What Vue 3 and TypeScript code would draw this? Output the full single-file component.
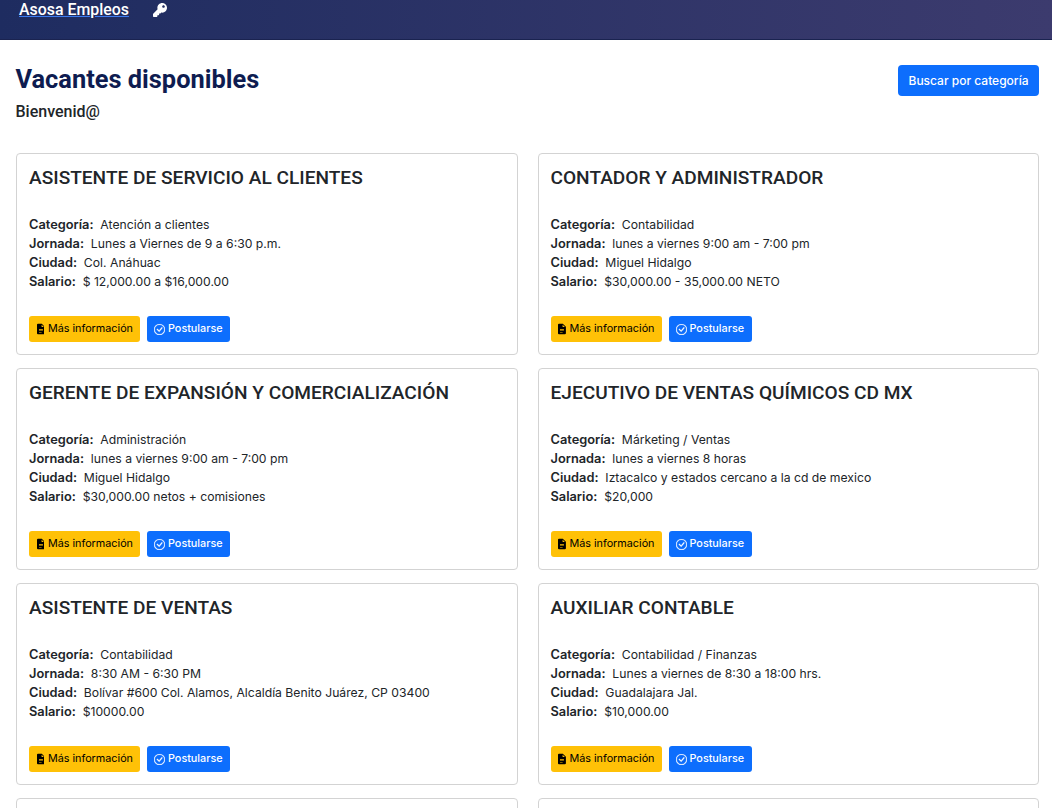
<script setup lang="ts">
interface Job { title: string; cat: string; jor: string; ciu: string; sal: string }
const jobs: Job[] = [
  { title: 'ASISTENTE DE SERVICIO AL CLIENTES', cat: 'Atención a clientes', jor: 'Lunes a Viernes de 9 a 6:30 p.m.', ciu: 'Col. Anáhuac', sal: '$ 12,000.00 a $16,000.00' },
  { title: 'CONTADOR Y ADMINISTRADOR', cat: 'Contabilidad', jor: 'lunes a viernes 9:00 am - 7:00 pm', ciu: 'Miguel Hidalgo', sal: '$30,000.00 - 35,000.00 NETO' },
  { title: 'GERENTE DE EXPANSIÓN Y COMERCIALIZACIÓN', cat: 'Administración', jor: 'lunes a viernes 9:00 am - 7:00 pm', ciu: 'Miguel Hidalgo', sal: '$30,000.00 netos + comisiones' },
  { title: 'EJECUTIVO DE VENTAS QUÍMICOS CD MX', cat: 'Márketing / Ventas', jor: 'lunes a viernes 8 horas', ciu: 'Iztacalco y estados cercano a la cd de mexico', sal: '$20,000' },
  { title: 'ASISTENTE DE VENTAS', cat: 'Contabilidad', jor: '8:30 AM - 6:30 PM', ciu: 'Bolívar #600 Col. Alamos, Alcaldía Benito Juárez, CP 03400', sal: '$10000.00' },
  { title: 'AUXILIAR CONTABLE', cat: 'Contabilidad / Finanzas', jor: 'Lunes a viernes de 8:30 a 18:00 hrs.', ciu: 'Guadalajara Jal.', sal: '$10,000.00' },
  { title: '', cat: '', jor: '', ciu: '', sal: '' },
  { title: '', cat: '', jor: '', ciu: '', sal: '' },
]
</script>

<template>
  <div class="page">
    <nav class="nav">
      <a class="brand">Asosa Empleos</a>
      <svg class="key" viewBox="0 0 512 512" width="14" height="14" fill="#fff" aria-hidden="true">
        <path d="M512 176c0 97-79 176-176 176-11 0-22-1-33-3l-24 27c-5 5-11 8-18 8h-37v40c0 13-11 24-24 24h-40v40c0 13-11 24-24 24H24c-13 0-24-11-24-24v-78c0-6 3-12 7-17l162-162c-6-18-9-36-9-55C160 79 239 0 336 0s176 79 176 176zm-176-48c0 26 22 48 48 48s48-22 48-48-22-48-48-48-48 22-48 48z" />
      </svg>
    </nav>

    <main class="main">
      <header class="head">
        <div class="titles">
          <h1>Vacantes disponibles</h1>
          <p class="welcome">Bienvenid@</p>
        </div>
        <button class="btn-search">Buscar por categoría</button>
      </header>

      <section class="grid">
        <article v-for="(j, i) in jobs" :key="i" class="card">
          <template v-if="j.title">
            <h2>{{ j.title }}</h2>
            <div class="info">
              <div><b>Categoría:</b>&nbsp; {{ j.cat }}</div>
              <div><b>Jornada:</b>&nbsp; {{ j.jor }}</div>
              <div><b>Ciudad:</b>&nbsp; {{ j.ciu }}</div>
              <div><b>Salario:</b>&nbsp; {{ j.sal }}</div>
            </div>
            <div class="actions">
              <button class="btn yellow">
                <svg viewBox="0 0 12 16" width="9" height="12" fill="#000" aria-hidden="true">
                  <path fill-rule="evenodd" d="M1.500 0H7.300L12 4.700V14.500A1.500 1.500 0 0 1 10.500 16H1.500A1.500 1.500 0 0 1 0 14.500V1.500A1.500 1.500 0 0 1 1.500 0zM7 1.500V5H10.500zM3 8V9H9V8zM3 10.200V11.200H9V10.200zM3 12.400V13.400H7V12.400z" />
                </svg>
                <span>Más información</span>
              </button>
              <button class="btn blue">
                <svg viewBox="0 0 16 16" width="11" height="11" fill="#fff" stroke="#fff" stroke-width="0.4" aria-hidden="true">
                  <path d="M8 15A7 7 0 1 1 8 1a7 7 0 0 1 0 14zm0 1A8 8 0 1 0 8 0a8 8 0 0 0 0 16z" />
                  <path d="M10.970 4.970a.235.235 0 0 0-.02.022L7.477 9.417 5.384 7.323a.75.75 0 0 0-1.060 1.060L6.970 11.030a.75.75 0 0 0 1.079-.020l3.992-4.990a.75.75 0 0 0-1.071-1.050z" />
                </svg>
                <span>Postularse</span>
              </button>
            </div>
          </template>
        </article>
      </section>
    </main>
  </div>
</template>

<style>
html, body { margin: 0; background: #fff; overflow: hidden; }
</style>

<style scoped>
.page {
  height: 808px;
  overflow: hidden;
  font-family: Inter, "Liberation Sans", sans-serif;
  color: #212529;
}
.nav {
  height: 39px;
  border-bottom: 1px solid #1a2350;
  background: linear-gradient(90deg, #1e2c60 0%, #3c3b6e 100%);
  display: flex;
  align-items: flex-start;
  padding-left: 19px;
}
.brand {
  font: 500 15.900px/20px Roboto, sans-serif;
  color: #fff;
  text-decoration: underline;
  text-decoration-color: #3d7bf0;
}
.key { margin: 3px 0 0 24px; }
.main { padding: 23px 13px 0 16px; }
.head {
  display: flex;
  justify-content: space-between;
  align-items: flex-start;
  height: 90px;
}
.titles { margin-left: -0.500px; }
h1 {
  margin: 0;
  font: 700 25.400px/32px Roboto, sans-serif;
  color: #0e1c50;
}
.welcome {
  margin: 7px 0 0;
  font: 500 16px/20px Roboto, sans-serif;
  color: #212529;
}
.btn-search {
  margin-top: 2px;
  width: 141px;
  height: 31px;
  padding: 0;
  border: 0;
  border-radius: 4px;
  background: #0d6efd;
  color: #fff;
  font: 500 12px/31px Inter, sans-serif;
}
.grid {
  display: grid;
  grid-template-columns: 501.500px 501.500px;
  column-gap: 20px;
  row-gap: 13.100px;
}
.card {
  box-sizing: border-box;
  height: 202px;
  border: 1px solid #d3d3d3;
  border-radius: 4px;
  padding: 12px 12px 0;
  display: flex;
  flex-direction: column;
}
h2 {
  margin: 0;
  font: 500 19.100px/23px Roboto, sans-serif;
  color: #212529;
}
.info {
  margin-top: 26px;
  font-size: 12.200px;
  line-height: 19px;
}
.info b { font-weight: 600; font-size: 12.800px; }
.actions {
  margin-top: 25px;
  display: flex;
  gap: 7px;
}
.btn {
  height: 26px;
  padding: 0 7px;
  border: 0;
  border-radius: 3px;
  font: 500 10.800px/26px Inter, sans-serif;
  display: inline-flex;
  align-items: center;
  gap: 3px;
  white-space: nowrap;
}
.yellow { background: #ffc107; color: #000; width: 111px; font-weight: 400; padding-left: 7.500px; gap: 3.500px; }
.blue { background: #0d6efd; color: #fff; width: 83px; }
</style>
